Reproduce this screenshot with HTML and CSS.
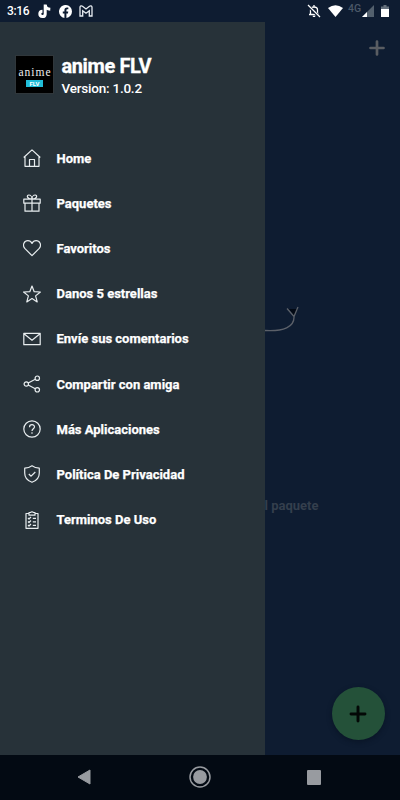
FILE: index.html
```html
<!DOCTYPE html>
<html lang="es">
<head>
<meta charset="utf-8">
<title>anime FLV</title>
<link rel="stylesheet" href="styles.css">
</head>
<body>
<div class="screen">
  <header class="status">
    <span class="clock">3:16</span>
    <svg class="tiktok" width="13" height="15" viewBox="0 0 13 15"><path d="M7.200 .5v9.600a2.700 2.700 0 1 1-2.700-2.900M7.300 1.500c.3 2 2 3.500 5 3.700" fill="none" stroke="#fff" stroke-width="3"/></svg>
    <svg class="facebook" width="13" height="13" viewBox="0 0 24 24"><path fill="#fff" d="M24 12A12 12 0 1 0 10 23.800v-8.300H7V12h3V9.400c0-3 1.800-4.700 4.500-4.700 1.300 0 2.700.2 2.700.2v3h-1.500c-1.500 0-2 .9-2 1.900V12h3.400l-.6 3.500h-2.800v8.300A12 12 0 0 0 24 12z"/></svg>
    <svg class="gmail" width="14" height="12" viewBox="0 0 14 12"><path d="M1 2.200v8.800h2.700V5.800L7 8.300l3.300-2.500V11H13V2.200C13 .8 11.500.5 10.500 1.300L7 4 3.500 1.300C2.500.5 1 .8 1 2.200z" fill="none" stroke="#e8edf2" stroke-width="1.300"/></svg>
    <span class="grow"></span>
    <svg class="bell" width="14" height="14" viewBox="0 0 14 14"><path d="M3.500 10V6c0-4 7-4 7 0v4M2 10.500h10M7 1v1.500M5.800 12.400h2.400" fill="none" stroke="#fff" stroke-width="1.300"/><path d="M1 1.500l12 12" stroke="#0e1c31" stroke-width="3"/><path d="M1 1l12 12" stroke="#fff" stroke-width="1.200"/></svg>
    <svg class="wifi" width="15" height="12" viewBox="0 0 15 12"><path d="M0 3Q7.500-2.500 15 3L7.500 12z" fill="#fff"/></svg>
    <span class="net">4G</span>
    <svg class="signal" width="12" height="12" viewBox="0 0 12 12"><path d="M12 0v12H0z" fill="#53606d"/><path d="M5 7v5H0z" fill="#fff"/></svg>
    <svg class="battery" width="8" height="12" viewBox="0 0 8 12"><path d="M2.500 0h3v1.500H8V4H0V1.500h2.500z" fill="#65707c"/><path d="M0 4h8v8H0z" fill="#fff"/></svg>
  </header>
  <main class="main">
    <aside class="drawer">
      <div class="brand">
        <div class="logo"><span class="logo-name">anime</span><span class="logo-tag">FLV</span></div>
        <div><div class="title">anime FLV</div><div class="version">Version: 1.0.2</div></div>
      </div>
      <nav class="menu">
        <a class="item"><svg class="icon" viewBox="0 0 18 18"><path d="M.7 8.500L9 .9l8.300 7.600M2 7.500v9.800h14V7.500M6.500 17v-6.500h5V17"/></svg><span>Home</span></a>
        <a class="item"><svg class="icon" viewBox="0 0 18 18"><path d="M.8 5.200h16.400v4H.8zM2 9.200v8h14v-8M9 5.200v12M9 5C3.500 5 3.500 1 5.800 1 7.600 1 9 3 9 5zM9 5c5.500 0 5.500-4 3.200-4C10.400 1 9 3 9 5z"/></svg><span>Paquetes</span></a>
        <a class="item"><svg class="icon" viewBox="0 0 18 18"><path d="M9 16.700L2 9.700C-1.300 5.800 1.500 1.700 4.900 1.700 7 1.700 8.300 3 9 4.400c.7-1.400 2-2.700 4.100-2.700 3.400 0 6.200 4.100 2.900 8z"/></svg><span>Favoritos</span></a>
        <a class="item"><svg class="icon" viewBox="0 0 18 18"><path d="M9 1l2.200 5.700 6.200.3-4.800 3.900 1.600 6L9 13.500l-5.200 3.400 1.600-6L.6 7l6.200-.3z"/></svg><span>Danos 5 estrellas</span></a>
        <a class="item"><svg class="icon" viewBox="0 0 18 18"><path d="M.8 3.300h16.400v11.400H.8zM1 3.800l8 6.500 8-6.500"/></svg><span>Envíe sus comentarios</span></a>
        <a class="item"><svg class="icon" viewBox="0 0 18 18"><circle cx="3.300" cy="9" r="2.200"/><circle cx="14.300" cy="3.200" r="2.200"/><circle cx="14.300" cy="14.800" r="2.200"/><path d="M5.200 8l7.100-3.800M5.200 10l7.100 3.800"/></svg><span>Compartir con amiga</span></a>
        <a class="item"><svg class="icon" viewBox="0 0 18 18"><circle cx="9" cy="9" r="8.200"/><path d="M6.500 7.200c0-3.400 5-3.200 5-.4C11.500 8.800 9 8.700 9 11M9 12.300v1.500"/></svg><span>Más Aplicaciones</span></a>
        <a class="item"><svg class="icon" viewBox="0 0 18 18"><path d="M9 .8c2 1.500 4.500 2.300 7.300 2.400V8c0 5-3 7.800-7.300 9.300C4.700 15.800 1.700 13 1.700 8V3.200C4.500 3.100 7 2.300 9 .8zM5.800 9l2.300 2.200L12.300 7"/></svg><span>Política De Privacidad</span></a>
        <a class="item"><svg class="icon" viewBox="0 0 18 18"><path d="M6 2.500H3v14.800h12V2.500h-3M6 1.500h1.700c.3-1 2.300-1 2.600 0H12v2.700H6zM5 7l1 1 2-2M9.800 7.300H13M5 10.500l1 1 2-2M9.800 10.800H13M5 14l1 1 2-2M9.800 14.300H13"/></svg><span>Terminos De Uso</span></a>
      </nav>
    </aside>
    <section class="content">
      <svg class="add" width="16" height="16" viewBox="0 0 16 16"><path d="M8 1.500v13M1.500 8h13" stroke="#5a5d62" stroke-width="2.700" stroke-linecap="round"/></svg>
      <svg class="arrow" width="36" height="28" viewBox="0 0 36 28"><path d="M24 4l5 7 4-7z" fill="#020914"/><path d="M0 25.500c18 1 30-3 29-15M22 3.500l7 8L33 2" fill="none" stroke="#5b6069" stroke-width="1.300"/></svg>
      <div class="hint">l paquete</div>
      <div class="fab"><svg width="18" height="18" viewBox="0 0 18 18"><path d="M9 2v14M2 9h14" stroke="#030806" stroke-width="2.900" stroke-linecap="round"/></svg></div>
    </section>
  </main>
  <footer class="navbar">
    <svg class="back" width="14" height="16" viewBox="0 0 14 16"><path d="M13 1v14L1 8z" fill="#989ba0" stroke="#989ba0" stroke-linejoin="round"/></svg>
    <svg class="homekey" width="22" height="22" viewBox="0 0 22 22"><circle cx="11" cy="11" r="10" fill="none" stroke="#989ba0" stroke-width="1.500"/><circle cx="11" cy="11" r="6.900" fill="#989ba0"/></svg>
    <span class="recent"></span>
  </footer>
</div>
</body>
</html>
```
FILE: styles.css
```css
* { box-sizing: border-box; }
body { margin: 0; font-family: Roboto, sans-serif; color: #fff; }
svg { display: block; flex: none; }
.screen { width: 400px; height: 800px; display: flex; flex-direction: column; background: #0e1c31; overflow: hidden; }
.status { height: 22px; display: flex; align-items: center; padding: 0 11px 0 7px; background: #0e1c31; }
.clock { width: 31px; font-size: 12px; font-weight: 500; line-height: 22px; letter-spacing: -.35px; }
.facebook { margin-left: 8px; }
.gmail { margin-left: 7px; }
.grow { flex: 1; }
.wifi { margin-left: 7px; }
.net { width: 14px; margin-left: 5px; font-size: 10.500px; line-height: 12px; font-weight: 500; color: #4b5868; align-self: flex-start; padding-top: 3px; }
.signal { margin: 0 7px 0 0; }
.main { height: 733px; display: grid; grid-template-columns: 264.500px 1fr; }
.drawer { background: #273239; }
.brand { display: flex; gap: 7.500px; padding: 33px 0 0 15px; height: 113.500px; }
.logo { width: 39px; height: 39px; background: #000; border: 1px solid #30373b; display: flex; flex-direction: column; align-items: center; }
.logo-name { font-family: "Liberation Serif", serif; font-size: 11.500px; line-height: 14px; letter-spacing: 1px; margin: 9px 0 1px 1px; color: #eee; }
.logo-tag { width: 17px; height: 7px; background: #21bdd8; font-size: 6px; line-height: 7px; font-weight: 700; text-align: center; }
.title { font-size: 20px; font-weight: 700; line-height: 23px; letter-spacing: -.4px; white-space: nowrap; -webkit-text-stroke: .3px #fff; }
.version { font-size: 13.500px; font-weight: 500; line-height: 20px; letter-spacing: -.22px; white-space: nowrap; }
.menu { display: grid; grid-auto-rows: 45.200px; }
.item { display: flex; align-items: center; padding-left: 23px; gap: 15.500px; font-size: 13px; font-weight: 700; white-space: nowrap; -webkit-text-stroke: .25px #fff; }
.icon { width: 18px; height: 18px; fill: none; stroke: #e8edef; stroke-width: 1.200; stroke-linejoin: round; }
.content { display: flex; flex-direction: column; background: #0e1c31; }
.add { margin: 18px 15px 0 auto; }
.arrow { margin-top: 249px; }
.hint { margin-top: 165px; font-size: 13px; font-weight: 700; line-height: 16px; color: #343f4d; }
.fab { width: 53px; height: 53px; margin: auto 15.500px 15px auto; border-radius: 50%; background: #245139; display: flex; align-items: center; justify-content: center; box-shadow: 0 2px 5px #07101f99; }
.navbar { height: 45px; background: #030a13; display: flex; align-items: center; padding: 0 0 1px 77px; }
.homekey { margin-left: 98px; }
.recent { width: 14px; height: 15px; margin-left: 96px; border-radius: 1px; background: #989ba0; }
```
